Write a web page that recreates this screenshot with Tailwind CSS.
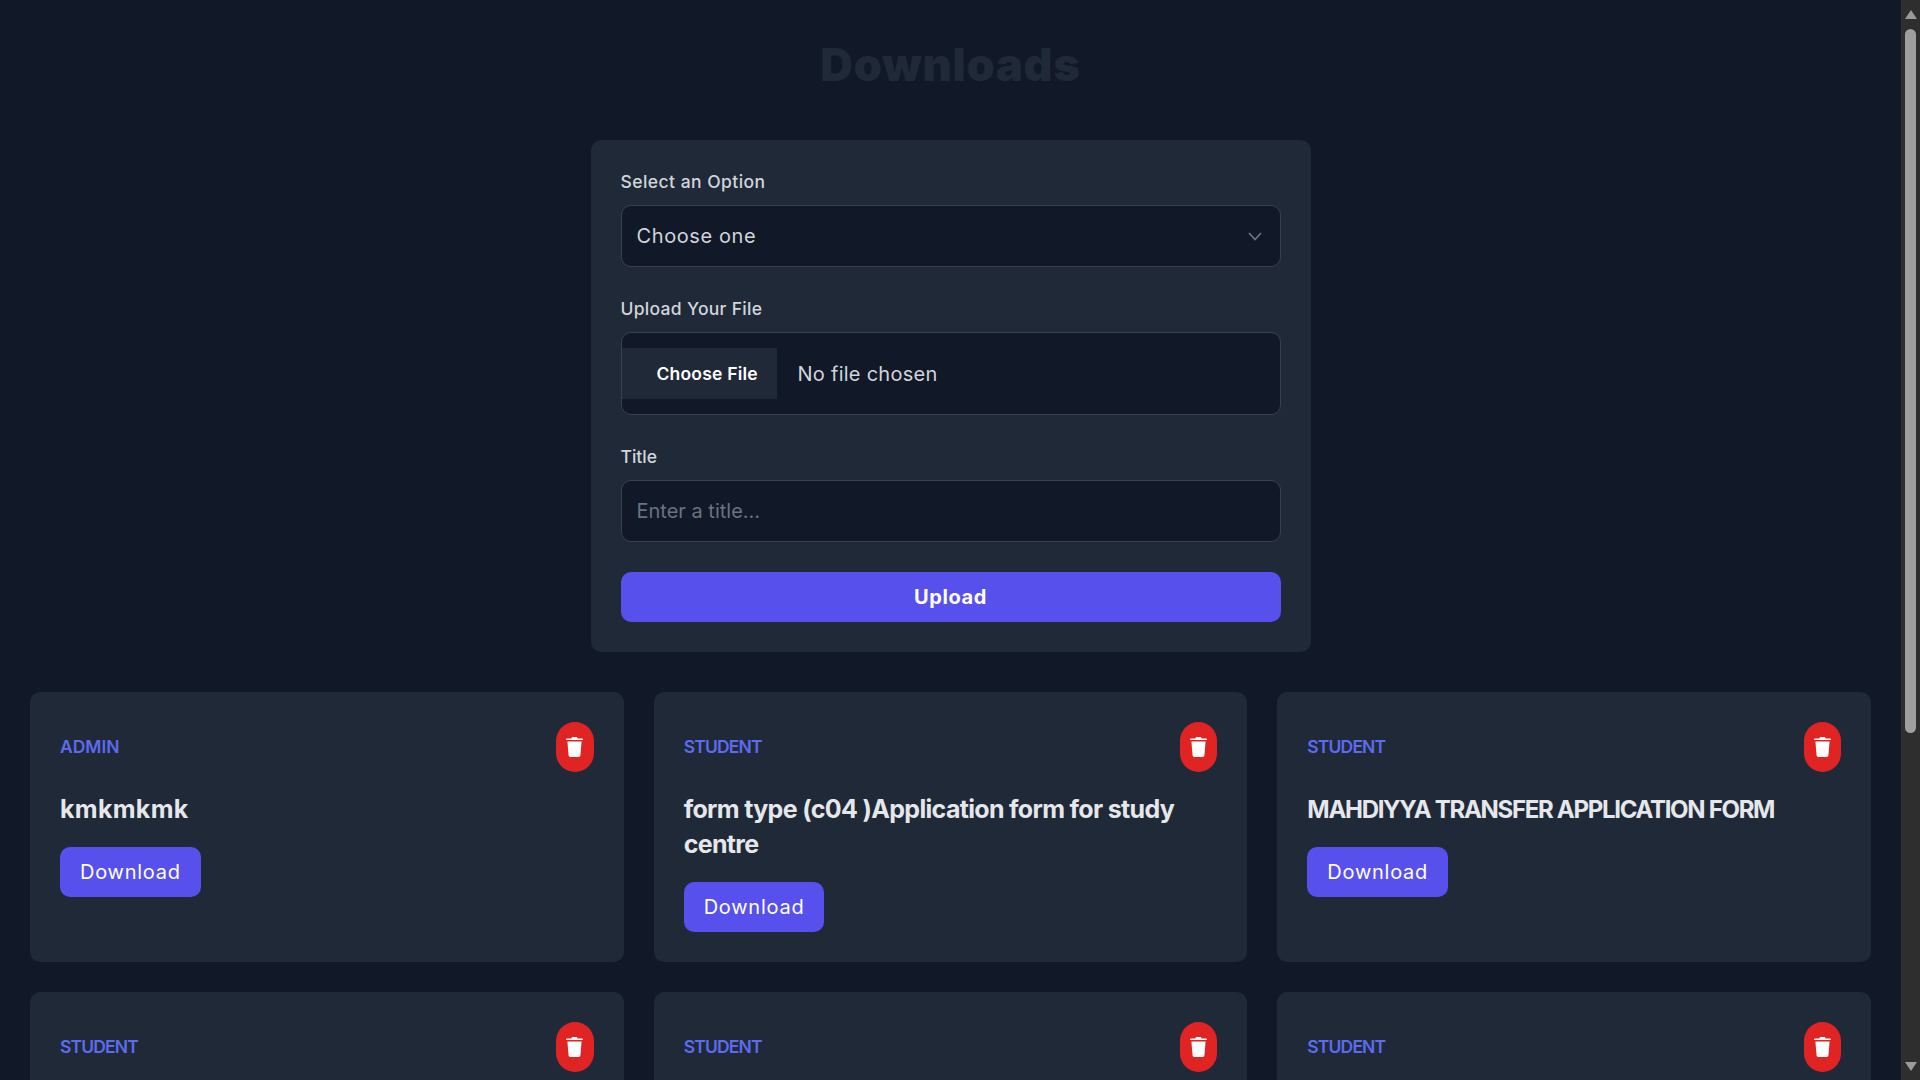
<!DOCTYPE html>
<html lang="en">
<head>
  <meta charset="UTF-8">
  <meta name="viewport" content="width=device-width, initial-scale=1.0">
  <title>Downloads</title>
  <script src="https://cdn.jsdelivr.net/npm/@tailwindcss/browser@4"></script>
</head>
<body class="bg-[#111827] font-['Inter',sans-serif]">
  <div class="flex h-screen overflow-hidden">
    <main class="flex-1 min-w-0 px-[30px] pt-[40px]">
      <h1 class="text-center text-[45px] leading-[50px] font-black tracking-[0.8px] text-[#1f2937] mb-[50px]">Downloads</h1>

      <form class="w-[720px] mx-auto bg-[#1f2937] rounded-[10px] p-[30px] mb-[40px]">
        <label class="block text-[17.5px] leading-[23px] font-medium tracking-[0.45px] text-[#d1d5db] mb-[12px]">Select an Option</label>
        <div class="relative mb-[30px]">
          <select class="block w-full h-[62px] appearance-none bg-[#111827] border border-[#374151] rounded-[10px] pl-[15px] text-[20px] tracking-[0.6px] text-[#d1d5db]">
            <option>Choose one</option>
          </select>
          <svg class="absolute right-[19px] top-[27px] w-[14px] h-[9px] text-[#6b7280]" viewBox="0 0 14 9" fill="none" stroke="currentColor" stroke-width="1.8"><path d="M1 1l6 6.5L13 1"/></svg>
        </div>

        <label class="block text-[17.5px] leading-[23px] font-medium tracking-[0.3px] text-[#d1d5db] mb-[12px]">Upload Your File</label>
        <div class="flex items-center h-[83px] bg-[#111827] border border-[#374151] rounded-[10px] mb-[30px]">
          <span class="flex items-center h-[51px] w-[155px] bg-[#1f2937] pl-[35px] pt-[2px] text-[17.5px] font-semibold tracking-[0.2px] text-white">Choose File</span>
          <span class="ml-[21px] text-[20px] tracking-[0.26px] text-[#d1d5db]">No file chosen</span>
        </div>

        <label class="block text-[17.5px] leading-[23px] font-medium text-[#d1d5db] mb-[12px]">Title</label>
        <input type="text" placeholder="Enter a title..." class="block w-full h-[62px] bg-[#111827] border border-[#374151] rounded-[10px] px-[15px] text-[20px] text-[#d1d5db] placeholder:text-[#6b7280] mb-[30px]">

        <button type="button" class="block w-full h-[50px] bg-[#5850ec] rounded-[10px] text-[20px] font-bold tracking-[0.6px] text-white">Upload</button>
      </form>

      <div class="grid grid-cols-3 gap-[30px]">
        <div class="bg-[#1f2937] rounded-[10px] p-[30px]">
          <div class="flex items-center justify-between mb-[20px]">
            <span class="text-[17.5px] font-semibold text-[#5c6bf0]">ADMIN</span>
            <button class="flex items-center justify-center w-[37.5px] h-[50px] rounded-full bg-[#e02424]">
              <svg class="w-[17px] h-[20px]" viewBox="0 0 17 20" fill="#fff"><path d="M6 0h5l.6 1.600H16a1 1 0 0 1 1 1v.4H0v-.4a1 1 0 0 1 1-1h4.400zM1.400 4.600h14.200l-1.200 14a1.500 1.500 0 0 1-1.500 1.400H4.100a1.500 1.500 0 0 1-1.500-1.400z"/></svg>
            </button>
          </div>
          <h2 class="text-[25px] leading-[35px] font-bold tracking-[0.3px] text-[#e5e7eb] mb-[20px]">kmkmkmk</h2>
          <button class="h-[50px] px-[20px] bg-[#5850ec] rounded-[10px] text-[20px] tracking-[0.75px] text-white">Download</button>
        </div>

        <div class="bg-[#1f2937] rounded-[10px] p-[30px]">
          <div class="flex items-center justify-between mb-[20px]">
            <span class="text-[17.5px] font-semibold tracking-[-0.85px] text-[#5c6bf0]">STUDENT</span>
            <button class="flex items-center justify-center w-[37.5px] h-[50px] rounded-full bg-[#e02424]">
              <svg class="w-[17px] h-[20px]" viewBox="0 0 17 20" fill="#fff"><path d="M6 0h5l.6 1.600H16a1 1 0 0 1 1 1v.4H0v-.4a1 1 0 0 1 1-1h4.400zM1.400 4.600h14.200l-1.200 14a1.500 1.500 0 0 1-1.500 1.400H4.100a1.500 1.500 0 0 1-1.500-1.400z"/></svg>
            </button>
          </div>
          <h2 class="text-[25px] leading-[35px] font-bold tracking-[-0.67px] text-[#e5e7eb] mb-[20px]">form type (c04 )Application form for study centre</h2>
          <button class="h-[50px] px-[20px] bg-[#5850ec] rounded-[10px] text-[20px] tracking-[0.75px] text-white">Download</button>
        </div>

        <div class="bg-[#1f2937] rounded-[10px] p-[30px]">
          <div class="flex items-center justify-between mb-[20px]">
            <span class="text-[17.5px] font-semibold tracking-[-0.85px] text-[#5c6bf0]">STUDENT</span>
            <button class="flex items-center justify-center w-[37.5px] h-[50px] rounded-full bg-[#e02424]">
              <svg class="w-[17px] h-[20px]" viewBox="0 0 17 20" fill="#fff"><path d="M6 0h5l.6 1.600H16a1 1 0 0 1 1 1v.4H0v-.4a1 1 0 0 1 1-1h4.400zM1.400 4.600h14.200l-1.200 14a1.500 1.500 0 0 1-1.500 1.400H4.100a1.500 1.500 0 0 1-1.500-1.400z"/></svg>
            </button>
          </div>
          <h2 class="text-[24px] leading-[35px] font-bold tracking-[-1.3px] text-[#e5e7eb] mb-[20px]">MAHDIYYA TRANSFER APPLICATION FORM</h2>
          <button class="h-[50px] px-[20px] bg-[#5850ec] rounded-[10px] text-[20px] tracking-[0.75px] text-white">Download</button>
        </div>

        <div class="bg-[#1f2937] rounded-[10px] p-[30px] h-[270px]">
          <div class="flex items-center justify-between">
            <span class="text-[17.5px] font-semibold tracking-[-0.85px] text-[#5c6bf0]">STUDENT</span>
            <button class="flex items-center justify-center w-[37.5px] h-[50px] rounded-full bg-[#e02424]">
              <svg class="w-[17px] h-[20px]" viewBox="0 0 17 20" fill="#fff"><path d="M6 0h5l.6 1.600H16a1 1 0 0 1 1 1v.4H0v-.4a1 1 0 0 1 1-1h4.400zM1.400 4.600h14.200l-1.200 14a1.500 1.500 0 0 1-1.500 1.400H4.100a1.500 1.500 0 0 1-1.500-1.400z"/></svg>
            </button>
          </div>
        </div>
        <div class="bg-[#1f2937] rounded-[10px] p-[30px] h-[270px]">
          <div class="flex items-center justify-between">
            <span class="text-[17.5px] font-semibold tracking-[-0.85px] text-[#5c6bf0]">STUDENT</span>
            <button class="flex items-center justify-center w-[37.5px] h-[50px] rounded-full bg-[#e02424]">
              <svg class="w-[17px] h-[20px]" viewBox="0 0 17 20" fill="#fff"><path d="M6 0h5l.6 1.600H16a1 1 0 0 1 1 1v.4H0v-.4a1 1 0 0 1 1-1h4.400zM1.400 4.600h14.200l-1.200 14a1.500 1.500 0 0 1-1.500 1.400H4.100a1.500 1.500 0 0 1-1.500-1.400z"/></svg>
            </button>
          </div>
        </div>
        <div class="bg-[#1f2937] rounded-[10px] p-[30px] h-[270px]">
          <div class="flex items-center justify-between">
            <span class="text-[17.5px] font-semibold tracking-[-0.85px] text-[#5c6bf0]">STUDENT</span>
            <button class="flex items-center justify-center w-[37.5px] h-[50px] rounded-full bg-[#e02424]">
              <svg class="w-[17px] h-[20px]" viewBox="0 0 17 20" fill="#fff"><path d="M6 0h5l.6 1.600H16a1 1 0 0 1 1 1v.4H0v-.4a1 1 0 0 1 1-1h4.400zM1.400 4.600h14.200l-1.200 14a1.500 1.500 0 0 1-1.500 1.400H4.100a1.500 1.500 0 0 1-1.500-1.400z"/></svg>
            </button>
          </div>
        </div>
      </div>
    </main>

    <!-- page scrollbar -->
    <aside class="flex flex-col items-center w-[19px] shrink-0 bg-[#2e2e2e] pt-[10px] pb-[9px]">
      <svg class="w-[12px] h-[9px]" viewBox="0 0 12 9" fill="#9a9a9a"><path d="M6 0l6 9H0z"/></svg>
      <div class="w-[11px] h-[704px] mt-[10px] bg-[#9f9f9f] rounded-full"></div>
      <svg class="w-[12px] h-[9px] mt-auto" viewBox="0 0 12 9" fill="#9a9a9a"><path d="M0 0h12L6 9z"/></svg>
    </aside>
  </div>
</body>
</html>
